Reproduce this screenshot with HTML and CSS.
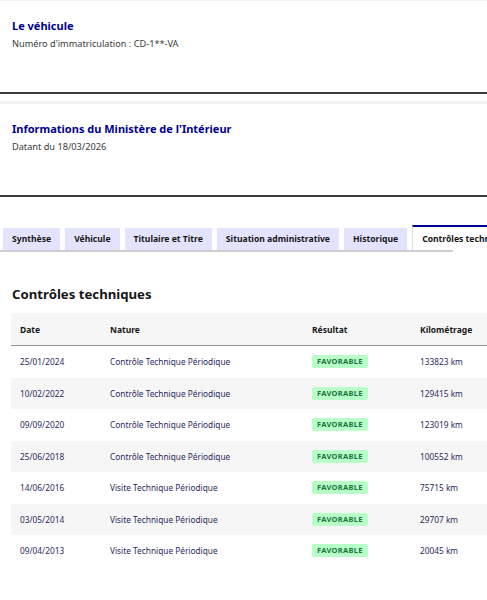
FILE: index.html
```html
<!DOCTYPE html>
<html lang="fr">
<head>
    <meta charset="UTF-8">
    <meta name="viewport" content="width=device-width, initial-scale=1.0">
    <title>Historique du véhicule</title>
    <link rel="stylesheet" href="styles.css">
</head>
<body>
    <div class="page">
        <section class="card">
            <h2 class="card-title">Le véhicule</h2>
            <p class="card-desc">Numéro d'immatriculation : CD-1**-VA</p>
        </section>

        <section class="card">
            <h2 class="card-title">Informations du Ministère de l'Intérieur</h2>
            <p class="card-desc">Datant du 18/03/2026</p>
        </section>

        <nav class="tabs">
            <div class="tab-list">
                <button class="tab">Synthèse</button>
                <button class="tab">Véhicule</button>
                <button class="tab">Titulaire et Titre</button>
                <button class="tab">Situation administrative</button>
                <button class="tab">Historique</button>
                <button class="tab active">Contrôles techniques</button>
            </div>
            <div class="tab-line"></div>
        </nav>

        <h1 class="section-title">Contrôles techniques</h1>

        <div class="table-wrap">
            <table class="ct-table">
                <thead>
                    <tr>
                        <th class="col-date">Date</th>
                        <th class="col-nature">Nature</th>
                        <th class="col-result">Résultat</th>
                        <th class="col-km">Kilométrage</th>
                    </tr>
                </thead>
                <tbody>
                    <tr>
                        <td>25/01/2024</td>
                        <td>Contrôle Technique Périodique</td>
                        <td><span class="badge">Favorable</span></td>
                        <td>133823 km</td>
                    </tr>
                    <tr>
                        <td>10/02/2022</td>
                        <td>Contrôle Technique Périodique</td>
                        <td><span class="badge">Favorable</span></td>
                        <td>129415 km</td>
                    </tr>
                    <tr>
                        <td>09/09/2020</td>
                        <td>Contrôle Technique Périodique</td>
                        <td><span class="badge">Favorable</span></td>
                        <td>123019 km</td>
                    </tr>
                    <tr>
                        <td>25/06/2018</td>
                        <td>Contrôle Technique Périodique</td>
                        <td><span class="badge">Favorable</span></td>
                        <td>100552 km</td>
                    </tr>
                    <tr>
                        <td>14/06/2016</td>
                        <td>Visite Technique Périodique</td>
                        <td><span class="badge">Favorable</span></td>
                        <td>75715 km</td>
                    </tr>
                    <tr>
                        <td>03/05/2014</td>
                        <td>Visite Technique Périodique</td>
                        <td><span class="badge">Favorable</span></td>
                        <td>29707 km</td>
                    </tr>
                    <tr>
                        <td>09/04/2013</td>
                        <td>Visite Technique Périodique</td>
                        <td><span class="badge">Favorable</span></td>
                        <td>20045 km</td>
                    </tr>
                </tbody>
            </table>
        </div>
    </div>
</body>
</html>
```

FILE: styles.css
```css
body {
    margin: 0;
    padding: 0;
    background: #fff;
    font-family: "Noto Sans", "Open Sans", sans-serif;
    color: #161616;
    overflow: hidden;
}
.page {
    margin-top: -2px;
}
.card {
    border-top: 3px solid #f2f2f2;
    border-bottom: 2px solid #3a3a3a;
    height: 74px;
    padding: 17px 12px 0;
    margin-bottom: 7px;
}
.card-title {
    margin: 0;
    font-size: 11px;
    font-weight: 700;
    line-height: 16px;
    color: #000091;
}
.card-desc {
    margin: 3px 0 0;
    font-size: 9.2px;
    line-height: 14px;
    color: #3a3a3a;
}
.tabs {
    margin-top: 28px;
    width: 100%;
    overflow: hidden;
}
.tab-list {
    display: flex;
    align-items: flex-end;
    gap: 5px;
    padding-left: 3px;
    white-space: nowrap;
}
.tab {
    flex: none;
    height: 22px;
    padding: 0 9px;
    border: none;
    background: #e3e3fd;
    font-family: inherit;
    font-size: 8.6px;
    font-weight: 700;
    color: #161616;
}
.tab.active {
    height: 25px;
    background: #fff;
    border-top: 2px solid #000091;
    border-left: 1px solid #ddd;
}
.tab-line {
    width: 453px;
    height: 2px;
    background: #cecece;
}
.section-title {
    margin: 32px 0 0 12px;
    font-size: 13.2px;
    font-weight: 700;
    line-height: 20px;
    color: #161616;
}
.table-wrap {
    margin: 9px 0 0 11px;
    overflow: hidden;
}
.ct-table {
    width: 540px;
    border-collapse: collapse;
    table-layout: fixed;
}
.ct-table th, .ct-table td {
    padding: 0 9px;
    text-align: left;
    white-space: nowrap;
}
.ct-table th {
    height: 32px;
    background: #f6f6f6;
    font-size: 8.5px;
    font-weight: 700;
    color: #161616;
    border-bottom: 1px solid #929292;
}
.ct-table td {
    height: 31.5px;
    font-size: 8.3px;
    color: #2a2a5c;
}
.ct-table tbody tr:nth-child(even) td {
    background: #f6f6f6;
}
.col-date {
    width: 72px;
}
.col-nature {
    width: 184px;
}
.col-result {
    width: 90px;
}
.badge {
    display: inline-block;
    padding: 0 5px;
    line-height: 13px;
    border-radius: 2px;
    background: #b8fec9;
    color: #18753c;
    font-size: 7.5px;
    font-weight: 700;
    letter-spacing: 0.3px;
    text-transform: uppercase;
}
```
